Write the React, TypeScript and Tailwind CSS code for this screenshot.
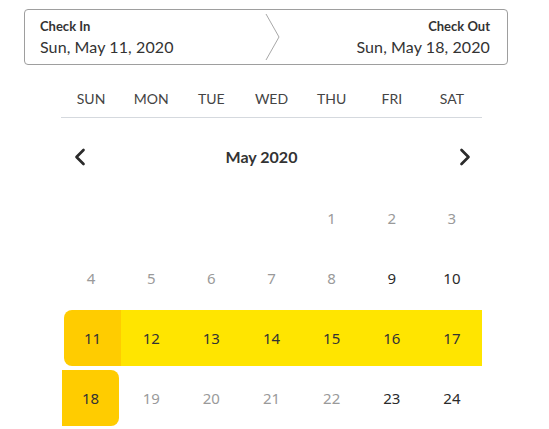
import React from 'react';
import { ChevronLeft, ChevronRight } from 'lucide-react';

const weekdays = ['SUN', 'MON', 'TUE', 'WED', 'THU', 'FRI', 'SAT'];

type Day = { n?: number; past?: boolean; kind?: 'start' | 'range' | 'end' };

const weeks: Day[][] = [
  [{}, {}, {}, {}, { n: 1, past: true }, { n: 2, past: true }, { n: 3, past: true }],
  [
    { n: 4, past: true }, { n: 5, past: true }, { n: 6, past: true }, { n: 7, past: true },
    { n: 8, past: true }, { n: 9 }, { n: 10 },
  ],
  [
    { n: 11, kind: 'start' }, { n: 12, kind: 'range' }, { n: 13, kind: 'range' }, { n: 14, kind: 'range' },
    { n: 15, kind: 'range' }, { n: 16, kind: 'range' }, { n: 17, kind: 'range' },
  ],
  [
    { n: 18, kind: 'end' }, { n: 19, past: true }, { n: 20, past: true }, { n: 21, past: true },
    { n: 22, past: true }, { n: 23 }, { n: 24 },
  ],
];

const cellClass = (d: Day) => {
  if (d.kind === 'start') return 'bg-[#ffcc00] text-[#333] rounded-l-lg ml-[3px]';
  if (d.kind === 'range') return 'bg-[#ffe500] text-[#333]';
  if (d.kind === 'end') return 'bg-[#ffcc00] text-[#333] rounded-r-lg ml-[1px] mr-[2px]';
  if (d.past) return 'text-[#9a9a9a]';
  return 'text-[#2b2b2b]';
};

export default function App() {
  return (
    <div className="w-[549px] h-[429px] overflow-hidden bg-white font-['Lato',sans-serif] text-[#333]">
      <div className="pt-[9px] pl-[24px]">
        <div className="w-[484px] h-[56px] border border-[#9e9e9e] rounded-[4px] flex items-stretch">
          <div className="w-[240px] flex flex-col justify-center pl-[15px] pt-[1px]">
            <span className="text-[13px] font-bold leading-[17px] text-[#333]">Check In</span>
            <span className="text-[16px] leading-[22px] text-[#333] mt-[1px] tracking-[0.1px]">Sun, May 11, 2020</span>
          </div>
          <svg width="16" height="54" viewBox="0 0 16 54" className="shrink-0">
            <path d="M1 4 L14 27 L1 50" fill="none" stroke="#a8a8a8" strokeWidth="1" />
          </svg>
          <div className="flex-1 flex flex-col justify-center items-end pr-[17px] pt-[1px]">
            <span className="text-[13px] font-bold leading-[17px] text-[#333]">Check Out</span>
            <span className="text-[16px] leading-[22px] text-[#333] mt-[1px] tracking-[0.1px]">Sun, May 18, 2020</span>
          </div>
        </div>
      </div>

      <div className="ml-[61px] w-[421px]">
        <div className="grid grid-cols-7 h-[53px] items-end pb-[9px] border-b border-[#d5d9de]">
          {weekdays.map(w => (
            <span key={w} className="text-center text-[14px] leading-[18px] text-[#444]">{w}</span>
          ))}
        </div>

        <div className="flex items-center h-[48px] mt-[15px] pl-[5px] pr-[3px]">
          <ChevronLeft size={28} strokeWidth={2.3} className="text-[#2b2b2b] shrink-0" />
          <div className="flex-1 flex justify-center">
            <span className="text-[16px] font-bold text-[#333] mr-[22px]">May 2020</span>
          </div>
          <ChevronRight size={28} strokeWidth={2.3} className="text-[#2b2b2b] shrink-0" />
        </div>

        <div className="mt-[9px] flex flex-col gap-[4px] font-['Noto_Sans',sans-serif]">
          {weeks.map((wk, i) => (
            <div key={i} className="grid grid-cols-7 h-[56px]">
              {wk.map((d, j) => (
                <div
                  key={j}
                  className={`flex items-center justify-center text-[15px] ${cellClass(d)}`}
                >
                  {d.n ?? ''}
                </div>
              ))}
            </div>
          ))}
        </div>
      </div>
    </div>
  );
}
